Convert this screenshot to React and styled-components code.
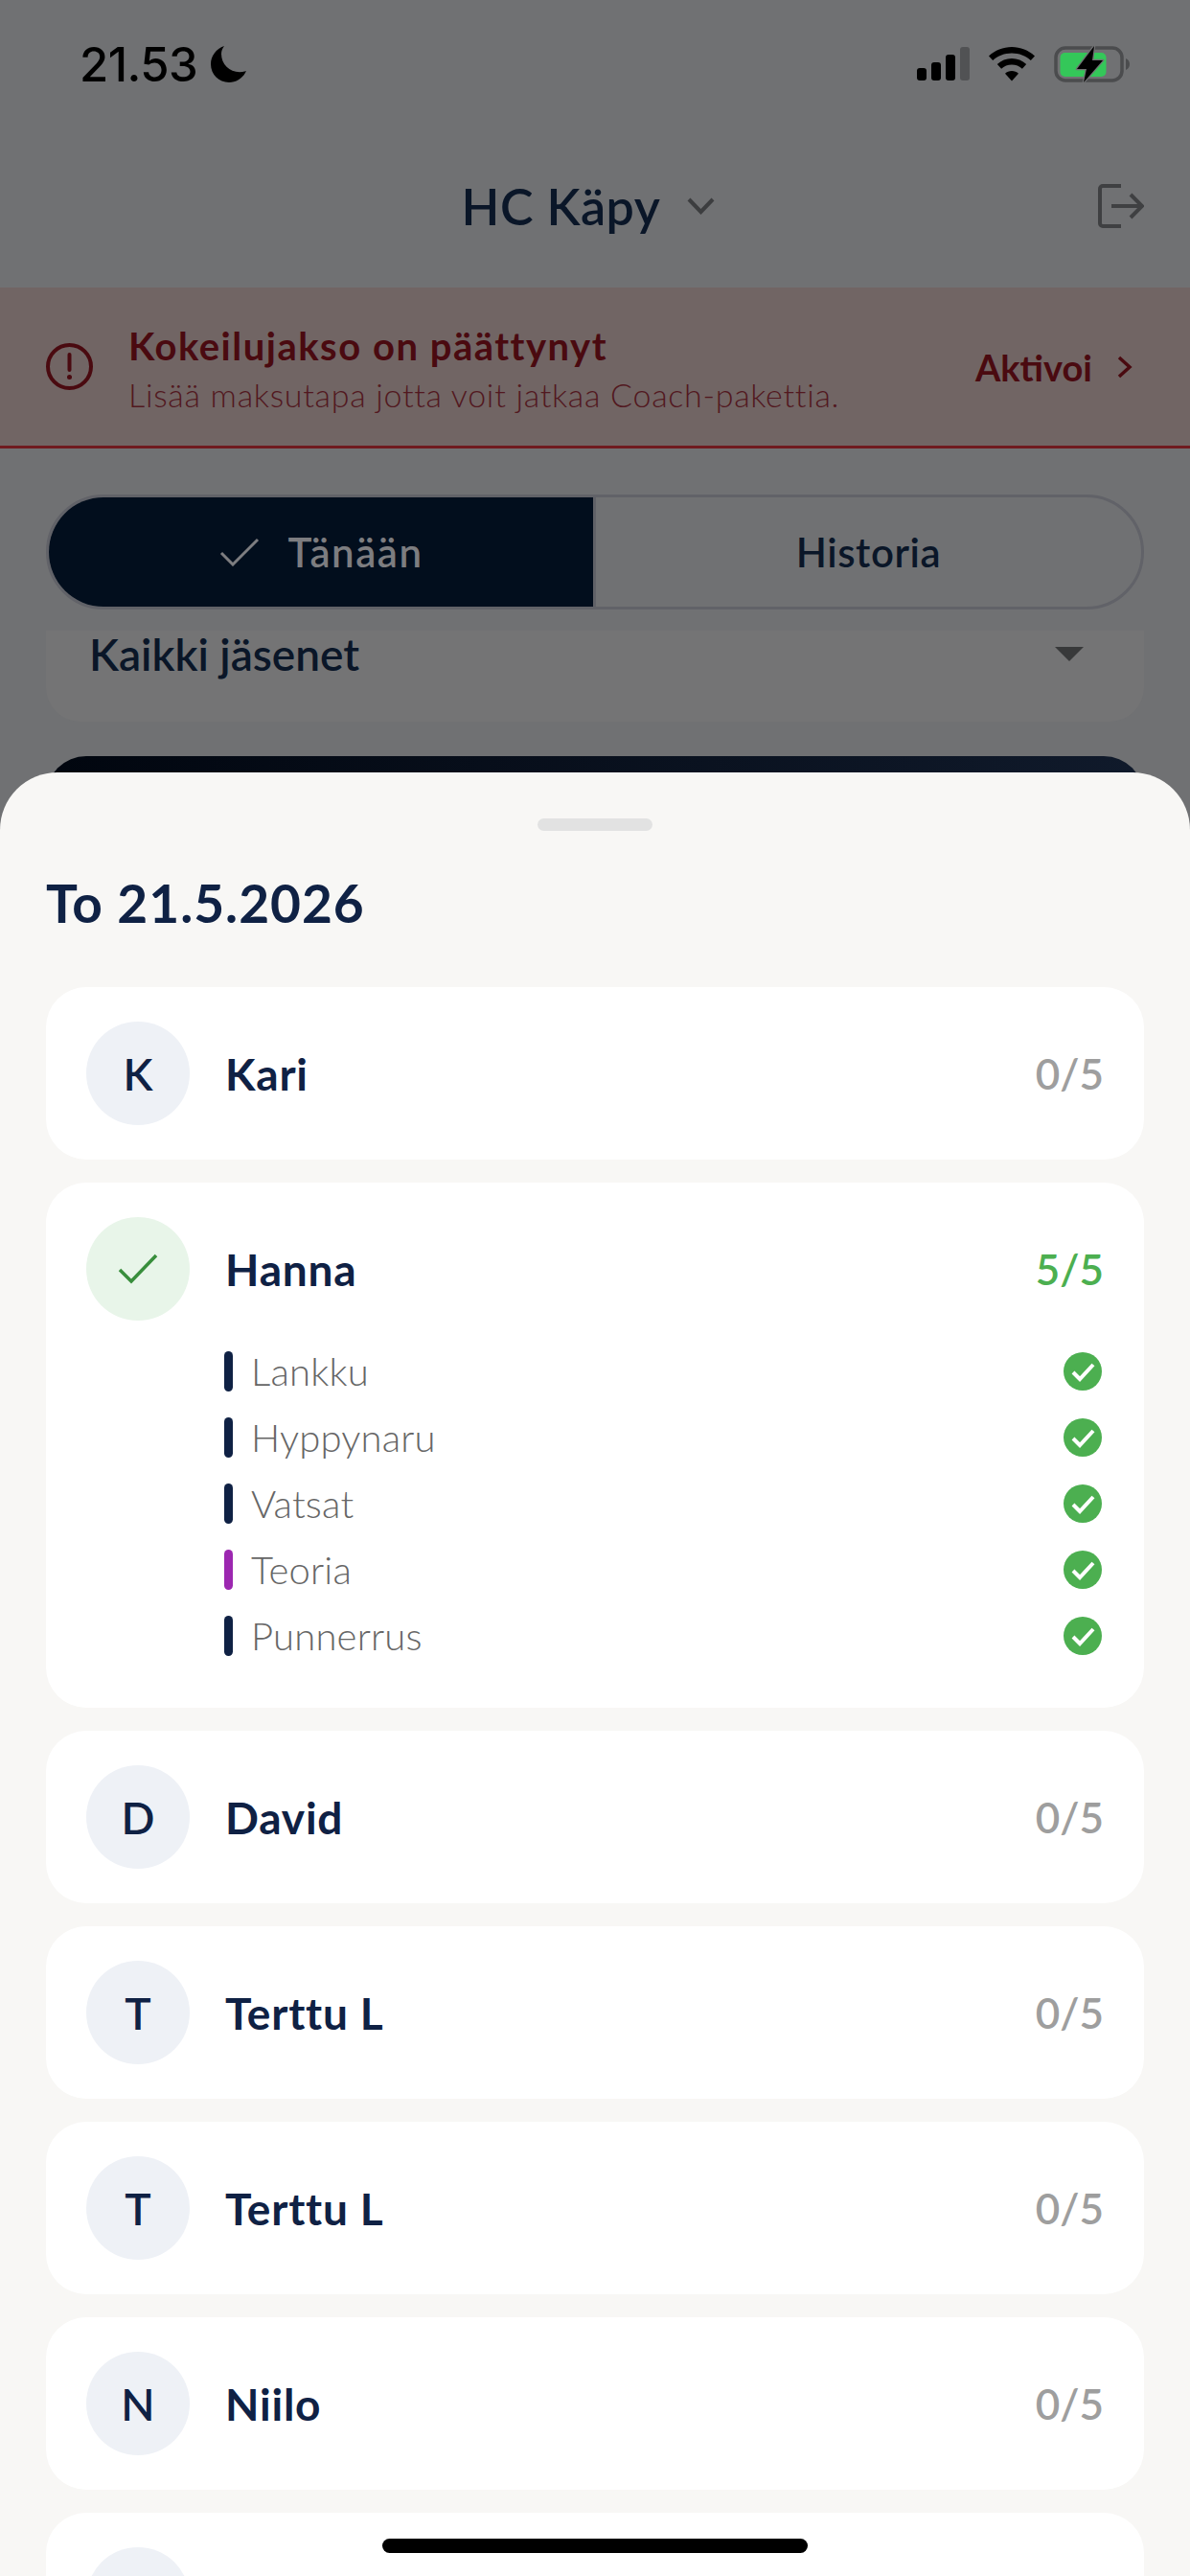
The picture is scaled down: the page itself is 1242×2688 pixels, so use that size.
import React from "react";
import styled, { createGlobalStyle } from "styled-components";

const GlobalStyle = createGlobalStyle`
  html, body { margin: 0; padding: 0; background: #707173; }
  * { box-sizing: border-box; }
`;

const FONT = `"Lato", "Noto Sans", sans-serif`;

const Page = styled.div`
  position: relative;
  width: 1242px;
  height: 2688px;
  overflow: hidden;
  background: #707173;
  font-family: ${FONT};
`;

const StatusBar = styled.div`
  height: 134px;
  display: flex;
  align-items: center;
  justify-content: space-between;
  padding: 0 62px 0 83px;
`;

const Clock = styled.div`
  display: flex;
  align-items: center;
  gap: 14px;
  font-family: "Inter", sans-serif;
  font-size: 49px;
  font-weight: 500;
  letter-spacing: -0.5px;
  color: #000;
`;

const StatusIcons = styled.div`
  display: flex;
  align-items: center;
  gap: 20px;
`;

const Header = styled.div`
  height: 166px;
  display: grid;
  grid-template-columns: 1fr auto 1fr;
  align-items: center;
  padding: 0 48px 4px 34px;
`;

const Club = styled.div`
  grid-column: 2;
  display: flex;
  align-items: center;
  gap: 28px;
  font-size: 52px;
  font-weight: 600;
  letter-spacing: 0.5px;
  color: #0a1628;
`;

const Logout = styled.div`
  grid-column: 3;
  justify-self: end;
  display: flex;
`;

const Banner = styled.div`
  height: 168px;
  display: flex;
  align-items: center;
  gap: 37px;
  padding: 0 60px 0 48px;
  background: #716564;
  border-bottom: 3px solid #701a1f;
`;

const BannerText = styled.div`
  flex: 1;
  display: flex;
  flex-direction: column;
  gap: 8px;
  padding-top: 5px;
`;

const BannerTitle = styled.div`
  font-size: 40px;
  font-weight: 700;
  letter-spacing: 1.5px;
  line-height: 46px;
  color: #4a0a10;
`;

const BannerSub = styled.div`
  font-size: 34px;
  font-weight: 300;
  letter-spacing: 0.7px;
  line-height: 40px;
  color: #521820;
`;

const Activate = styled.div`
  display: flex;
  align-items: center;
  gap: 26px;
  font-size: 38px;
  font-weight: 700;
  color: #4a0a10;
`;

const Tabs = styled.div`
  display: flex;
  height: 120px;
  margin: 48px 48px 0;
  border: 3px solid #616268;
  border-radius: 60px;
  overflow: hidden;
`;

const Tab = styled.div`
  width: ${(p) => (p.$active ? "571px" : "auto")};
  flex: ${(p) => (p.$active ? "none" : 1)};
  display: flex;
  align-items: center;
  justify-content: center;
  gap: 30px;
  font-size: 42px;
  font-weight: 600;
  letter-spacing: ${(p) => (p.$active ? "1.5px" : "0.6px")};
  background: ${(p) => (p.$active ? "#020e1d" : "transparent")};
  color: ${(p) => (p.$active ? "#7d7d80" : "#0a1628")};
  border-right: ${(p) => (p.$active ? "3px solid #616268" : "none")};
`;

const Select = styled.div`
  height: 95px;
  margin: 22px 48px 0;
  padding: 0 63px 0 45px;
  display: flex;
  justify-content: space-between;
  background: #747475;
  border-radius: 0 0 36px 36px;
  font-size: 46px;
  font-weight: 600;
  line-height: 50px;
  color: #0a1628;
`;

const Triangle = styled.div`
  width: 0;
  height: 0;
  margin-top: 17px;
  border-left: 15px solid transparent;
  border-right: 15px solid transparent;
  border-top: 15px solid #38393a;
`;

const DarkCard = styled.div`
  height: 200px;
  margin: 36px 48px 0;
  border-radius: 42px;
  background: linear-gradient(90deg, #01060f, #101a2b);
`;

const Sheet = styled.div`
  position: absolute;
  left: 0;
  right: 0;
  top: 806px;
  bottom: 0;
  overflow: hidden;
  padding: 48px 48px 0;
  background: #f8f7f5;
  border-radius: 60px 60px 0 0;
`;

const Handle = styled.div`
  width: 120px;
  height: 13px;
  margin: 0 auto;
  border-radius: 7px;
  background: #e2e2e2;
`;

const SheetTitle = styled.h2`
  margin: 42px 0 0;
  height: 66px;
  font-size: 55px;
  letter-spacing: 1px;
  line-height: 66px;
  font-weight: 700;
  color: #0f2144;
`;

const List = styled.div`
  margin-top: 55px;
  display: flex;
  flex-direction: column;
  gap: 24px;
`;

const Card = styled.div`
  padding: 36px 42px;
  background: #fff;
  border-radius: 42px;
`;

const Row = styled.div`
  display: flex;
  align-items: center;
`;

const Avatar = styled.div`
  width: 108px;
  height: 108px;
  flex: none;
  display: flex;
  align-items: center;
  justify-content: center;
  border-radius: 50%;
  font-size: 46px;
  font-weight: 600;
  color: #0f2144;
  background: ${(p) => (p.$done ? "#e8f5e9" : "#eef1f6")};
`;

const Name = styled.div`
  flex: 1;
  margin-left: 37px;
  font-size: 46px;
  font-weight: 700;
  letter-spacing: 0.8px;
  color: #0f2144;
`;

const Count = styled.div`
  font-size: 44px;
  font-weight: 600;
  color: ${(p) => (p.$done ? "#4caf50" : "#9e9e9e")};
`;

const Tasks = styled.div`
  margin: 32px 0 18px 144px;
  display: flex;
  flex-direction: column;
  gap: 27px;
`;

const Task = styled.div`
  height: 42px;
  display: flex;
  align-items: center;
  padding-right: 2px;
`;

const TaskBar = styled.div`
  width: 9px;
  height: 42px;
  border-radius: 5px;
  background: ${(p) => p.$color};
`;

const TaskName = styled.div`
  flex: 1;
  margin-left: 19px;
  font-size: 40px;
  font-weight: 300;
  letter-spacing: 0.2px;
  color: #666;
`;

const HomeBar = styled.div`
  position: absolute;
  left: 399px;
  top: 2649px;
  width: 444px;
  height: 15px;
  border-radius: 8px;
  background: #000;
`;

const Moon = () => (
  <svg width="38" height="38" viewBox="0 0 38 38">
    <path d="M14 0C5.500 3 0 10.500 0 19c0 10.500 8.500 19 19 19 8 0 15-5 18-12-2 .8-4.500 1.200-7 1.200C19.500 27.200 11 18.700 11 8.200c0-3 1-5.700 3-8.200z" fill="#000" />
  </svg>
);

const Signal = () => (
  <svg width="55" height="36" viewBox="0 0 55 36">
    <rect x="0" y="22" width="10" height="13" rx="3" fill="#000" />
    <rect x="15" y="16" width="10" height="19" rx="3" fill="#000" />
    <rect x="30" y="8" width="10" height="27" rx="3" fill="#000" />
    <rect x="45" y="0" width="10" height="35" rx="3" fill="#515254" />
  </svg>
);

const Wifi = () => (
  <svg width="48" height="36" viewBox="0 0 48 36">
    <path d="M24 0c9 0 17.500 3.500 24 9.500l-4.200 4.600C38.500 9.200 31.500 6.500 24 6.500S9.500 9.200 4.200 14.100L0 9.500C6.500 3.500 15 0 24 0z" fill="#000" />
    <path d="M24 12c5.800 0 11 2.200 15.200 6l-4.300 4.700C32 20 28.200 18.500 24 18.500S16 20 13.100 22.700L8.800 18c4.200-3.800 9.400-6 15.200-6z" fill="#000" />
    <path d="M24 25c2.700 0 5.100 1 7 2.700L24 35.500l-7-7.800c1.900-1.700 4.300-2.700 7-2.700z" fill="#000" />
  </svg>
);

const Battery = () => (
  <svg width="80" height="40" viewBox="0 0 80 40">
    <rect x="2" y="3" width="69" height="34" rx="10" fill="none" stroke="#4b4c4e" strokeWidth="3.500" />
    <rect x="6.500" y="8" width="48" height="25" rx="5" fill="#34c759" />
    <path d="M75 14c2.500 1 4 3 4 6s-1.500 5-4 6z" fill="#4b4c4e" />
    <path
      d="M42 1 L24 25 H34 L31 39 L51 16 H40 Z"
      fill="#000"
      stroke="#707173"
      strokeWidth="2.500"
      strokeLinejoin="round"
      paintOrder="stroke"
    />
  </svg>
);

const ChevronDown = () => (
  <svg width="29" height="18" viewBox="0 0 29 18" fill="none">
    <path d="M2 2l12.500 13L27 2" stroke="#3c3d3f" strokeWidth="4" />
  </svg>
);

const LogoutIcon = () => (
  <svg width="48" height="46" viewBox="0 0 48 46" fill="none" stroke="#3f4042" strokeWidth="4">
    <path d="M24 2H5a3 3 0 0 0-3 3v36a3 3 0 0 0 3 3h19" />
    <path d="M14 23h31M34 11l12 12-12 12" />
  </svg>
);

const AlertIcon = () => (
  <svg width="49" height="49" viewBox="0 0 49 49" fill="none">
    <circle cx="24.500" cy="24.500" r="22.500" stroke="#4a0a10" strokeWidth="4" />
    <path d="M24.500 12v16" stroke="#4a0a10" strokeWidth="4" strokeLinecap="round" />
    <circle cx="24.500" cy="35.500" r="2.500" fill="#4a0a10" />
  </svg>
);

const ChevronRight = () => (
  <svg width="16" height="24" viewBox="0 0 16 24" fill="none">
    <path d="M2 2l11 10L2 22" stroke="#4a0a10" strokeWidth="3.500" />
  </svg>
);

const TabCheck = () => (
  <svg width="42" height="30" viewBox="0 0 42 30" fill="none">
    <path d="M2 16l12 12L40 2" stroke="#7d7d80" strokeWidth="3" />
  </svg>
);

const BigCheck = () => (
  <svg width="42" height="32" viewBox="0 0 42 32" fill="none">
    <path d="M2 17l12 12L40 2" stroke="#388e3c" strokeWidth="3.500" />
  </svg>
);

const DoneCircle = () => (
  <svg width="40" height="40" viewBox="0 0 40 40">
    <circle cx="20" cy="20" r="20" fill="#4caf50" />
    <path d="M10 21l7 7 14-15" fill="none" stroke="#fff" strokeWidth="4" />
  </svg>
);

const tasks = [
  { name: "Lankku", color: "#0f2144" },
  { name: "Hyppynaru", color: "#0f2144" },
  { name: "Vatsat", color: "#0f2144" },
  { name: "Teoria", color: "#9c27b0" },
  { name: "Punnerrus", color: "#0f2144" },
];

function Member({ name }) {
  return (
    <Card>
      <Row>
        <Avatar>{name[0]}</Avatar>
        <Name>{name}</Name>
        <Count>0/5</Count>
      </Row>
    </Card>
  );
}

export default function App() {
  return (
    <Page>
      <GlobalStyle />
      <StatusBar>
        <Clock>
          21.53 <Moon />
        </Clock>
        <StatusIcons>
          <Signal />
          <Wifi />
          <Battery />
        </StatusIcons>
      </StatusBar>
      <Header>
        <Club>
          HC Käpy <ChevronDown />
        </Club>
        <Logout>
          <LogoutIcon />
        </Logout>
      </Header>
      <Banner>
        <AlertIcon />
        <BannerText>
          <BannerTitle>Kokeilujakso on päättynyt</BannerTitle>
          <BannerSub>Lisää maksutapa jotta voit jatkaa Coach-pakettia.</BannerSub>
        </BannerText>
        <Activate>
          Aktivoi <ChevronRight />
        </Activate>
      </Banner>
      <Tabs>
        <Tab $active>
          <TabCheck /> Tänään
        </Tab>
        <Tab>Historia</Tab>
      </Tabs>
      <Select>
        Kaikki jäsenet
        <Triangle />
      </Select>
      <DarkCard />

      <Sheet>
        <Handle />
        <SheetTitle>To 21.5.2026</SheetTitle>
        <List>
          <Member name="Kari" />
          <Card>
            <Row>
              <Avatar $done>
                <BigCheck />
              </Avatar>
              <Name>Hanna</Name>
              <Count $done>5/5</Count>
            </Row>
            <Tasks>
              {tasks.map((t) => (
                <Task key={t.name}>
                  <TaskBar $color={t.color} />
                  <TaskName>{t.name}</TaskName>
                  <DoneCircle />
                </Task>
              ))}
            </Tasks>
          </Card>
          <Member name="David" />
          <Member name="Terttu L" />
          <Member name="Terttu L" />
          <Member name="Niilo" />
          <Card>
            <Row>
              <Avatar />
            </Row>
          </Card>
        </List>
      </Sheet>
      <HomeBar />
    </Page>
  );
}
